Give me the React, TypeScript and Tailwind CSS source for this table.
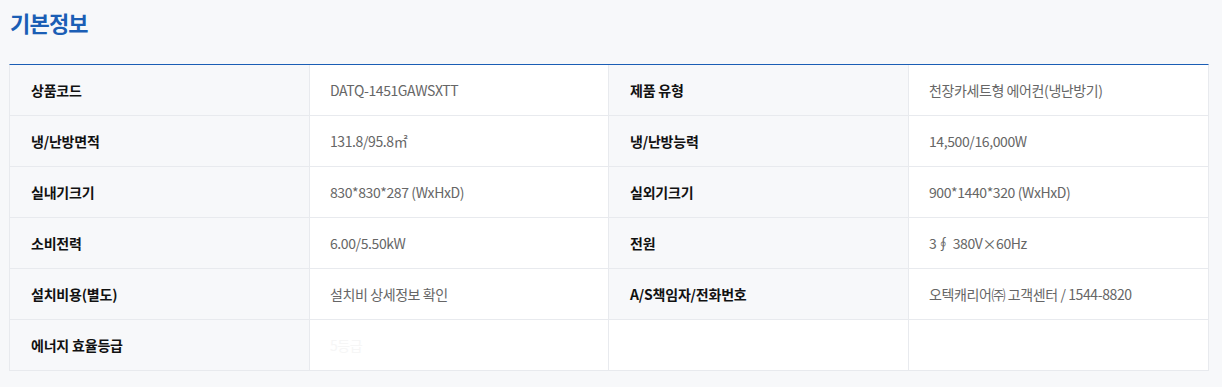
import React from "react";

const rows: [string, string, string, string][] = [
  ["상품코드", "DATQ-1451GAWSXTT", "제품 유형", "천장카세트형 에어컨(냉난방기)"],
  ["냉/난방면적", "131.8/95.8㎡", "냉/난방능력", "14,500/16,000W"],
  ["실내기크기", "830*830*287 (WxHxD)", "실외기크기", "900*1440*320 (WxHxD)"],
  ["소비전력", "6.00/5.50kW", "전원", "3∮ 380V×60Hz"],
  ["설치비용(별도)", "설치비 상세정보 확인", "A/S책임자/전화번호", "오텍캐리어㈜ 고객센터 / 1544-8820"],
  ["에너지 효율등급", "5등급", "", ""],
];

export default function App() {
  return (
    <div
      className="w-[1222px] h-[387px] bg-[#f7f8fa] overflow-hidden"
      style={{ fontFamily: '"Noto Sans CJK KR", "Noto Sans", sans-serif' }}
    >
      <h2 className="pl-[10px] pt-[6px] text-[22px] leading-[32px] font-bold text-[#1b5eb5] tracking-[-0.8px]">
        기본정보
      </h2>
      <div className="ml-[9px] mt-[26px] w-[1200px] border-t border-t-[#1b5eb5] border-l border-r border-[#e8eaee]">
        {rows.map((r, i) => (
          <div key={i} className="grid grid-cols-[300px_299px_300px_299px] border-b border-[#e8eaee] h-[51px]">
            <div className="bg-[#f7f8fa] flex items-center pl-[21px] text-[14px] font-bold text-[#111] tracking-[-0.2px] border-r border-[#e8eaee]">
              {r[0]}
            </div>
            <div
              className={`bg-white flex items-center pl-[20px] text-[14px] tracking-[-0.4px] border-r border-[#e8eaee] ${
                i === 5 ? "text-[#f6f6f6]" : "text-[#666]"
              }`}
            >
              {r[1]}
            </div>
            <div
              className={`${i === 5 ? "bg-white" : "bg-[#f7f8fa]"} flex items-center pl-[21px] text-[14px] font-bold text-[#111] tracking-[-0.2px] border-r border-[#e8eaee]`}
            >
              {r[2]}
            </div>
            <div className="bg-white flex items-center pl-[20px] text-[14px] tracking-[-0.4px] text-[#666]">{r[3]}</div>
          </div>
        ))}
      </div>
    </div>
  );
}
